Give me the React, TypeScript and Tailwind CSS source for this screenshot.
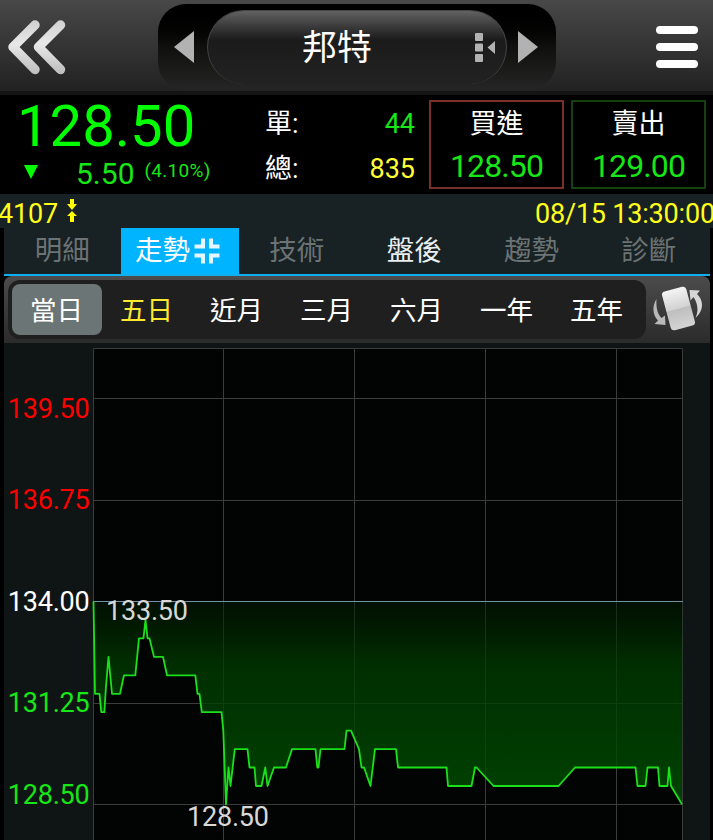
import { clsx } from "clsx";

type Point = [number, number];

const TABS = ["明細", "走勢", "技術", "盤後", "趨勢", "診斷"];
const ACTIVE_TAB = "走勢";
const BRIGHT_TAB = "盤後";

const RANGES = ["當日", "五日", "近月", "三月", "六月", "一年", "五年"];

// ── Chart data ─────────────────────────────────────────────

const CHART_LEFT = 93.5;
const CHART_RIGHT = 682.5;
const REF_PRICE = 134;
const REF_Y = 258.5;
const PX_PER_POINT = 36.9;

const GRID_X = [223.5, 354.5, 485.5, 616.5];
const GRID_Y = [55.5, 157.5, 360.5, 461.5];

const AXIS = [
  { label: "139.50", y: 75, fill: "#ff0000" },
  { label: "136.75", y: 166, fill: "#ff0000" },
  { label: "134.00", y: 268, fill: "#ffffff" },
  { label: "131.25", y: 369, fill: "#17e617" },
  { label: "128.50", y: 461, fill: "#17e617" },
];

// [x, price]
const PRICES: Point[] = [
  [93.5, 134], [95, 131.5], [99.5, 131.5], [101.3, 131], [104.3, 131],
  [106, 131.7], [108.5, 132.5], [112, 131.5], [120, 131.5], [124, 132],
  [135.3, 132], [139, 133], [143.5, 133], [145.5, 133.5], [147.5, 133],
  [149.5, 133], [154, 132.5], [163, 132.5], [167, 132], [195.3, 132],
  [197.5, 131.5], [199.5, 131.5], [201.8, 131], [221.5, 131], [223.3, 130.5],
  [226, 128.5], [228.5, 129.5], [230.5, 129], [234.8, 130], [247.5, 130],
  [249.5, 129.5], [254.5, 129.5], [256, 129], [261.5, 129], [265.3, 129.5],
  [267.5, 129], [274, 129.5], [286, 129.5], [292, 130], [315.5, 130],
  [317.3, 129.5], [318.5, 129.5], [320.5, 130], [344.5, 130], [346.5, 130.5],
  [351, 130.5], [359, 130], [361.5, 129.5], [364, 129.5], [370.5, 129],
  [375, 130], [396, 130], [398, 129.5], [446.5, 129.5], [448, 129],
  [471.5, 129], [475, 129.5], [476.5, 129.5], [493.5, 129], [558.5, 129],
  [575, 129.5], [635.5, 129.5], [637.5, 129], [645.5, 129], [647.5, 129.5],
  [658, 129.5], [659.5, 129], [667.5, 129], [669, 129.5], [671, 129],
  [682, 128.5],
];

const LINE = PRICES.map(
  ([x, price]) => `${x},${(REF_Y + (REF_PRICE - price) * PX_PER_POINT).toFixed(1)}`,
).join(" ");

// ── Header ─────────────────────────────────────────────────

function Header() {
  return (
    <header className="flex h-[95px] items-start justify-between border-b-4 border-[#141414] bg-linear-to-b from-[#484848] to-[#222222]">
      <svg width="70" height="91" viewBox="0 0 70 91">
        <defs>
          <linearGradient id="chevron" x1="0" y1="20" x2="0" y2="74" gradientUnits="userSpaceOnUse">
            <stop offset="0" stopColor="#d0d0d0" />
            <stop offset="0.45" stopColor="#e8e8e8" />
            <stop offset="1" stopColor="#bdbdbd" />
          </linearGradient>
        </defs>
        <g fill="none" stroke="url(#chevron)" strokeWidth="9.5" strokeLinecap="round" strokeLinejoin="round">
          <path d="M35 25 L13 47 L35 69.5" />
          <path d="M60.5 25 L38.5 47 L60.5 69.5" />
        </g>
      </svg>

      <div className="mt-1 ml-[88px] flex h-[86px] w-[398px] items-center justify-between rounded-[28px] bg-linear-to-b from-black via-[#10100f] to-[#252525] px-4">
        <svg width="20" height="32" viewBox="0 0 20 32" fill="#b2b2b2">
          <path d="M0 16 L20 0 V32 Z" />
        </svg>
        <div className="ml-0.5 flex h-[74px] w-[300px] items-center rounded-full border-x border-t border-[#454545] bg-linear-to-b from-[#626262] via-[#1b1b1b] via-40% to-[#222222] pr-[11px]">
          <span className="flex-1 pt-0.5 pl-[38px] text-center text-[35px] leading-[42px] text-white">邦特</span>
          <svg className="ml-[47px]" width="20" height="30" viewBox="0 0 20 30" fill="#b2b2b2">
            <rect x="0" y="0" width="8" height="8" rx="1" />
            <rect x="0" y="10.5" width="8" height="8" rx="1" />
            <rect x="0" y="21" width="8" height="8" rx="1" />
            <path d="M12.500 14.500 L20 8 V21 Z" />
          </svg>
        </div>
        <svg width="20" height="32" viewBox="0 0 20 32" fill="#b2b2b2" className="mr-0.5">
          <path d="M20 16 L0 0 V32 Z" />
        </svg>
      </div>

      <div className="mt-[26px] mr-[15px] ml-auto flex w-[42px] flex-col gap-[9px]">
        <span className="h-2 rounded-full bg-white" />
        <span className="h-2 rounded-full bg-white" />
        <span className="h-2 rounded-full bg-white" />
      </div>
    </header>
  );
}

// ── Quote ──────────────────────────────────────────────────

interface QuoteBoxProps {
  label: string;
  price: string;
  className: string;
}

function QuoteBox({ label, price, className }: QuoteBoxProps) {
  return (
    <div className={clsx("flex h-[89px] w-[135px] flex-col items-center border-2", className)}>
      <span className="mt-1 text-[27px] leading-9 text-white">{label}</span>
      <span className="mt-1 text-[32px] leading-10 tracking-[-0.9px] text-[#17e617]">{price}</span>
    </div>
  );
}

function Quote() {
  return (
    <section className="flex h-[99px] bg-black">
      <div className="flex w-[266px] flex-col">
        <span className="ml-[17px] h-[62px] text-[58px] leading-[62px] text-[#00ff00]">128.50</span>
        <div className="mt-px flex h-8 items-center text-[#17e617]">
          <svg className="-mt-1 ml-[24px]" width="14" height="14" viewBox="0 0 14 14" fill="#00ff00">
            <path d="M0 0 H14 L7 14 Z" />
          </svg>
          <span className="ml-[38px] text-[30px] leading-8">5.50</span>
          <span className="-mt-1.5 ml-[10px] text-[19px] leading-8 tracking-[0.3px]">(4.10%)</span>
        </div>
      </div>

      <div className="flex w-[149px] flex-col text-[27px] leading-[45px]">
        <div className="mt-[7px] flex justify-between">
          <span className="-ml-px text-white">單:</span>
          <span className="text-[#17e617]">44</span>
        </div>
        <div className="flex justify-between">
          <span className="-ml-px text-white">總:</span>
          <span className="text-[#ffff33]">835</span>
        </div>
      </div>

      <div className="mt-[5px] ml-[14px] flex gap-[7px]">
        <QuoteBox label="買進" price="128.50" className="border-[#7a302a]" />
        <QuoteBox label="賣出" price="129.00" className="border-[#16400f]" />
      </div>
    </section>
  );
}

function InfoBar() {
  return (
    <div className="flex h-[34px] items-center overflow-hidden bg-[#182123] text-[27px] leading-[34px] tracking-[-0.2px] whitespace-nowrap text-[#ffff1a]">
      <span className="-ml-0.5 w-[69px] shrink-0 pt-[5px]">4107</span>
      <svg width="10" height="24" viewBox="0 0 10 24" fill="#ffff00" className="shrink-0">
        <path d="M3 0 H7 V5 H10 L5 11 L0 5 H3 Z" />
        <path d="M5 12 L10 17 H7 V23 H3 V17 H0 Z" />
      </svg>
      <span className="ml-[458px] shrink-0 pt-[5px]">08/15 13:30:00</span>
    </div>
  );
}

// ── Tabs ───────────────────────────────────────────────────

function Tabs() {
  return (
    <nav className="flex h-12 border-b-2 border-[#10b0f0] bg-[#182123] pr-0.5">
      {TABS.map((tab) => (
        <div
          key={tab}
          className={clsx(
            "flex flex-1 items-center justify-center pr-px text-[27.500px] leading-9",
            tab === ACTIVE_TAB && "bg-[#00b4ff] text-white",
            tab === BRIGHT_TAB && "text-[#e8eded]",
            tab !== ACTIVE_TAB && tab !== BRIGHT_TAB && "text-[#6c7374]",
          )}
        >
          {tab}
          {tab === ACTIVE_TAB && (
            <svg className="mr-1 ml-1" width="26" height="26" viewBox="0 0 26 26" fill="none" stroke="#e4f6ff" strokeWidth="4">
              <path d="M0.500 8.500 H9 V0.500 M17 0.500 V8.500 H25.500 M0.500 17.500 H9 V25.500 M25.500 17.500 H17 V25.500" />
            </svg>
          )}
        </div>
      ))}
    </nav>
  );
}

function RangeBar() {
  return (
    <div className="flex h-[67px] rounded-t-lg bg-linear-to-b from-[#4c4c4c] to-[#2b2b2b] pt-1 pl-1">
      <div className="flex h-[59px] w-[638px] rounded-xl bg-[#1f1f1f] py-1 pl-1">
        {RANGES.map((range, i) => (
          <div
            key={range}
            className={clsx(
              "flex w-[90px] items-center justify-center rounded-lg pt-0.5 pr-px text-[26.500px] leading-9",
              i === 0 && "bg-[#6b7575]",
              i === 1 ? "text-[#ffe92e]" : "text-white",
            )}
          >
            {range}
          </div>
        ))}
      </div>
      <svg className="mt-1 ml-[6px]" width="52" height="50" viewBox="0 0 52 50">
        <defs>
          <linearGradient id="phone" x1="0" y1="0" x2="0" y2="1">
            <stop offset="0" stopColor="#f4f4f4" />
            <stop offset="0.5" stopColor="#d2d2d2" />
            <stop offset="0.51" stopColor="#bebebe" />
            <stop offset="1" stopColor="#d4d4d4" />
          </linearGradient>
        </defs>
        <rect x="14" y="4.500" width="25" height="40" rx="3.500" fill="url(#phone)" transform="rotate(-15 26.500 24.500)" />
        <path d="M4.500 15 C-0.500 23 1 32 6 36.500 L2.500 40 L13.500 41 L13 31.500 L9.500 34 C5 29 4 23 4.500 15 Z" fill="#b8b8b8" />
        <path d="M43.500 34 C52.500 26 51.500 16 45 10 L48 6.500 L37.500 6 L38.500 16.500 L41.500 13 C45.500 19 47 26 43.500 34 Z" fill="#d6d6d6" />
      </svg>
    </div>
  );
}

// ── Chart ──────────────────────────────────────────────────

function Chart() {
  return (
    <svg className="-ml-1 block" width="710" height="497" viewBox="0 0 710 497" fontSize="27" letterSpacing="-0.2">
      <defs>
        <linearGradient id="area" x1="0" y1="258" x2="0" y2="462" gradientUnits="userSpaceOnUse">
          <stop offset="0" stopColor="#001c00" stopOpacity="0.5" />
          <stop offset="0.3" stopColor="#003c00" stopOpacity="0.75" />
          <stop offset="1" stopColor="#004e00" stopOpacity="0.85" />
        </linearGradient>
      </defs>
      <rect x="4" width="706" height="497" fill="#0f1414" />
      <rect x="93" y="5" width="590" height="492" fill="#020303" />

      <g stroke="#3b3d3d">
        {GRID_X.map((x) => (
          <path key={x} d={`M${x} 5 V497`} />
        ))}
        {GRID_Y.map((y) => (
          <path key={y} d={`M93 ${y} H683`} />
        ))}
        <path d={`M${CHART_LEFT} 497 V5.5 H${CHART_RIGHT} V497`} fill="none" />
      </g>
      <polygon points={`${CHART_LEFT},${REF_Y} ${LINE} ${CHART_RIGHT},${REF_Y}`} fill="url(#area)" />
      <path d={`M93 ${REF_Y} H683`} stroke="#6f93a3" />

      <polyline points={LINE} fill="none" stroke="#1be01b" strokeWidth="1.800" strokeLinejoin="round" />

      {AXIS.map((tick) => (
        <text key={tick.label} x="89.500" y={tick.y} textAnchor="end" fill={tick.fill}>
          {tick.label}
        </text>
      ))}
      <g fill="#d8d8d8">
        <text x="106" y="277">133.50</text>
        <text x="187" y="483">128.50</text>
      </g>
    </svg>
  );
}

export default function App() {
  return (
    <div className="h-[840px] w-[713px] overflow-hidden bg-black font-['Roboto','Noto_Sans_CJK_TC',sans-serif]">
      <Header />
      <Quote />
      <InfoBar />
      <div className="mr-[3px] ml-1">
        <Tabs />
        <RangeBar />
        <Chart />
      </div>
    </div>
  );
}
